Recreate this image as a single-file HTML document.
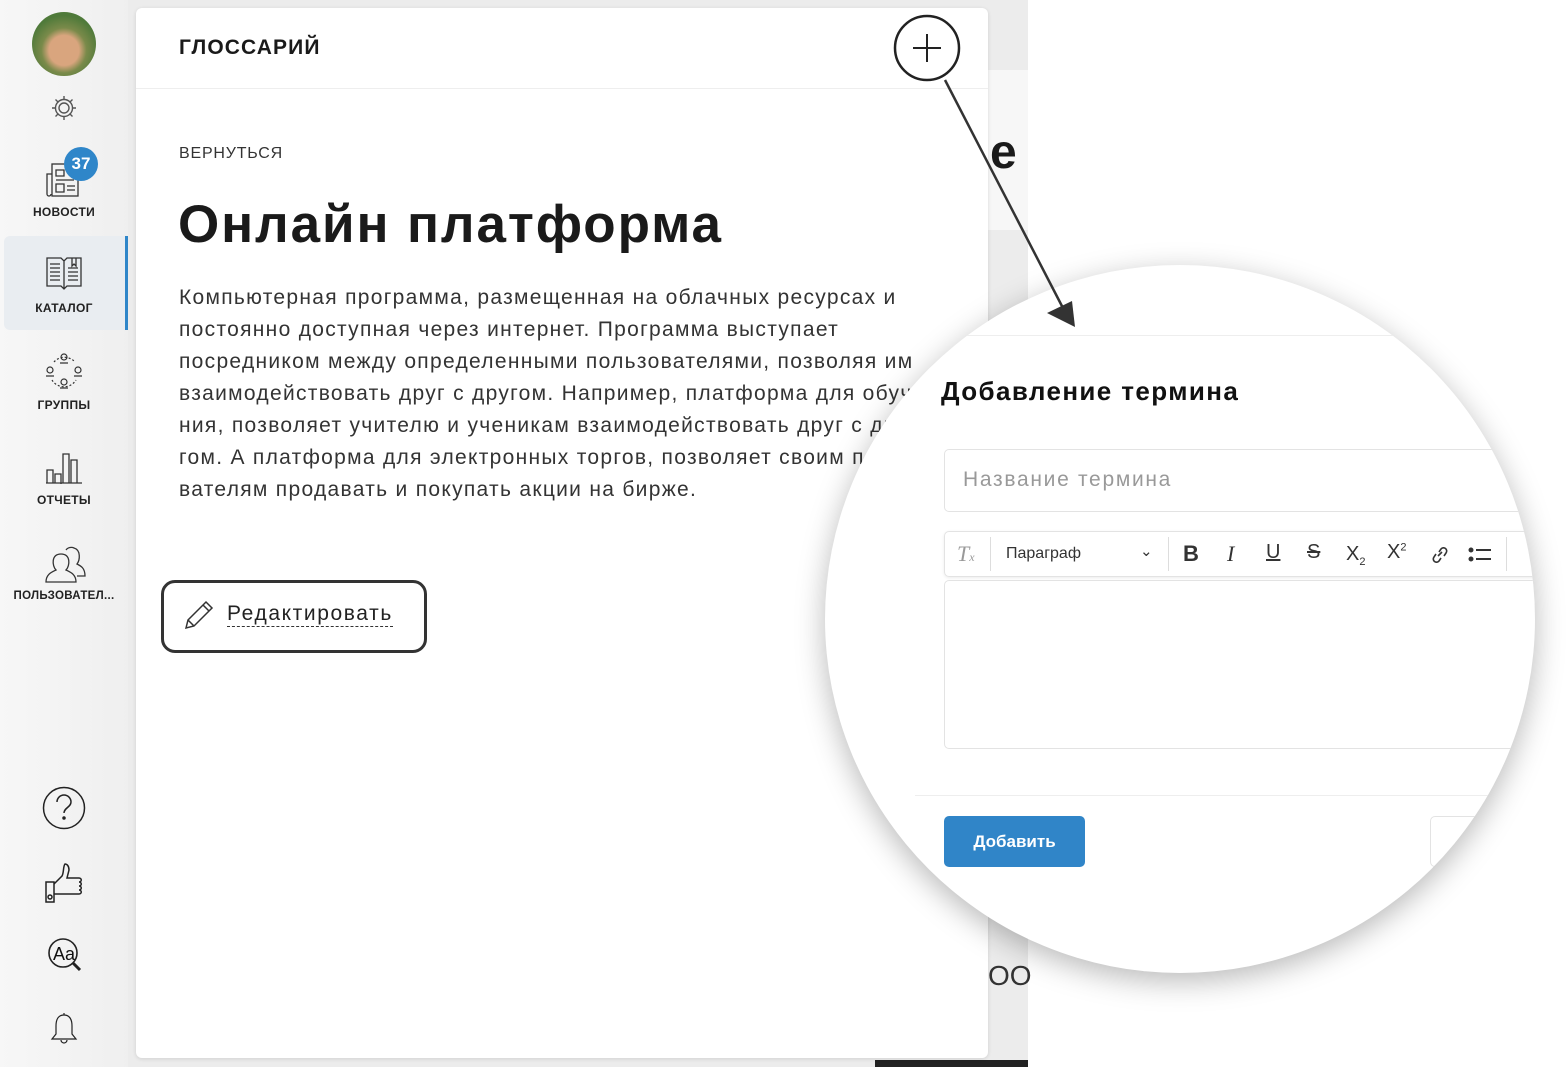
<!DOCTYPE html>
<html><head><meta charset="utf-8"><style>
*{margin:0;padding:0;box-sizing:border-box}
body{width:1568px;height:1067px;position:relative;overflow:hidden;background:#fff;font-family:"Liberation Sans",sans-serif;color:#1a1a1a}
.side{position:absolute;left:0;top:0;width:130px;height:1067px;background:linear-gradient(90deg,#f7f7f7,#efefef)}
.bg2{position:absolute;left:128px;top:0;width:900px;height:1067px;background:#ececec}
.card{position:absolute;left:136px;top:8px;width:852px;height:1050px;background:#fff;border-radius:6px;box-shadow:0 1px 4px rgba(0,0,0,.12)}
.nav{position:absolute;left:0;width:128px;text-align:center;font-size:12px;font-weight:bold;letter-spacing:.3px;color:#222}
.abs{position:absolute}
.txt{position:absolute;left:179px;top:282px;font-size:21px;line-height:32px;color:#333;letter-spacing:1.3px;white-space:nowrap}
.lens{position:absolute;left:825px;top:265px;width:710px;height:708px;border-radius:50%;background:#fff;overflow:hidden;box-shadow:0 8px 30px rgba(0,0,0,.28)}
.in{position:absolute;left:-825px;top:-265px;width:1568px;height:1067px}
</style></head><body>
<div class="side"></div>
<div class="bg2"></div>
<div class="abs" style="left:988px;top:70px;width:40px;height:160px;background:#f7f7f7"></div>
<div class="abs" style="left:990px;top:125px;font-size:48px;font-weight:bold">е</div>
<div class="abs" style="left:988px;top:960px;font-size:28px;color:#333">ОО</div>
<div class="abs" style="left:875px;top:1060px;width:153px;height:7px;background:#222"></div>
<!-- sidebar -->
<div class="abs" style="left:32px;top:12px;width:64px;height:64px;border-radius:50%;background:radial-gradient(circle at 50% 60%,#d9a57e 0 30%,#7a8a4a 45%,#4f7a3a 70%)"></div>
<svg class="abs" style="left:50px;top:94px" width="28" height="28" viewBox="0 0 28 28" fill="none" stroke="#555" stroke-width="1.4"><circle cx="14" cy="14" r="5"/><circle cx="14" cy="14" r="8.5"/><path d="M14 2v4M14 22v4M2 14h4M22 14h4M5.5 5.5l3 3M19.5 19.5l3 3M5.5 22.5l3-3M19.5 8.5l3-3"/></svg>
<svg class="abs" style="left:44px;top:160px" width="40" height="38" viewBox="0 0 40 38" fill="none" stroke="#333" stroke-width="1.3"><rect x="8" y="4" width="26" height="32"/><path d="M8 14H3v20a2 2 0 004 0M12 10h8v6h-8zM12 20h18M12 24h8v8h-8zM23 26h8M23 30h8"/></svg>
<div class="abs" style="left:64px;top:147px;width:34px;height:34px;border-radius:50%;background:#2f86c9;color:#fff;font-weight:bold;font-size:17px;text-align:center;line-height:34px">37</div>
<div class="nav" style="top:205px">НОВОСТИ</div>
<div class="abs" style="left:4px;top:236px;width:124px;height:94px;background:#e9edf1;border-radius:6px 0 0 6px"></div>
<div class="abs" style="left:125px;top:236px;width:3px;height:94px;background:#2f86c9"></div>
<svg class="abs" style="left:44px;top:254px" width="40" height="38" viewBox="0 0 40 38" fill="none" stroke="#333" stroke-width="1.3"><path d="M3 4h14l3 3 3-3h14v28H23l-3 3-3-3H3zM20 7v28M6 10h10M6 14h10M6 18h10M6 22h10M6 26h10M24 14h10M24 18h10M24 22h10M24 26h10M28 4v8l2-2 2 2V4"/></svg>
<div class="nav" style="top:301px">КАТАЛОГ</div>
<svg class="abs" style="left:44px;top:350px" width="40" height="42" viewBox="0 0 40 42" fill="none" stroke="#333" stroke-width="1.2"><circle cx="20" cy="7" r="3"/><circle cx="6" cy="20" r="3"/><circle cx="34" cy="20" r="3"/><circle cx="20" cy="32" r="3"/><path d="M16 13h8M2 26h8M30 26h8M16 38h8" /><path d="M10 12a14 14 0 0120-1M8 30a14 14 0 0024 0" stroke-dasharray="2 2"/></svg>
<div class="nav" style="top:398px">ГРУППЫ</div>
<svg class="abs" style="left:44px;top:452px" width="40" height="32" viewBox="0 0 40 32" fill="none" stroke="#333" stroke-width="1.3"><path d="M2 31h36M3 31V18h6v13M11 31V22h6v13M19 31V2h6v29M27 31V8h6v23"/></svg>
<div class="nav" style="top:493px">ОТЧЕТЫ</div>
<svg class="abs" style="left:44px;top:545px" width="42" height="38" viewBox="0 0 42 38" fill="none" stroke="#333" stroke-width="1.3"><path d="M2 37c0-8 6-10 10-12-4-4-5-16 5-16s9 12 5 16c4 2 10 4 10 12z"/><path d="M22 5c2-3 6-3 8-2 7 2 6 12 3 16 4 2 8 4 8 12h-8"/></svg>
<div class="nav" style="top:590px;font-size:11.5px">ПОЛЬЗОВАТЕЛ...</div>
<svg class="abs" style="left:42px;top:786px" width="44" height="44" viewBox="0 0 44 44" fill="none" stroke="#222" stroke-width="1.5"><circle cx="22" cy="22" r="20.5"/><path d="M15 16a7 7 0 1114 0c0 5-7 6-7 11"/><circle cx="22" cy="32" r="1" fill="#222"/></svg>
<svg class="abs" style="left:44px;top:860px" width="40" height="44" viewBox="0 0 40 44" fill="none" stroke="#222" stroke-width="1.5"><rect x="2" y="22" width="8" height="20"/><circle cx="6" cy="37" r="2"/><path d="M10 24l8-8c2-3 1-10 3-12 2 0 4 2 4 6l-2 8h12c3 0 3 4 0 4 3 0 3 4 0 4 3 0 3 4 0 4 3 0 3 4 0 4H10"/></svg>
<svg class="abs" style="left:46px;top:936px" width="38" height="38" viewBox="0 0 38 38" fill="none" stroke="#222" stroke-width="1.6"><circle cx="17" cy="17" r="14"/><path d="M27 27l7 7" stroke-width="3"/><text x="7" y="24" font-size="18" fill="#111" stroke="none" font-family="Liberation Sans">Aa</text></svg>
<svg class="abs" style="left:50px;top:1012px" width="28" height="34" viewBox="0 0 28 34" fill="none" stroke="#222" stroke-width="1.2"><path d="M14 3c-6 0-8 5-8 11v8l-4 5h24l-4-5v-8c0-6-2-11-8-11zM11 28a3 3 0 006 0M14 1v2"/></svg>
<!-- card -->
<div class="card">
<div class="abs" style="left:0;top:80px;width:852px;height:1px;background:#eee"></div>
</div>
<div class="abs" style="left:179px;top:36px;font-size:21px;font-weight:bold;letter-spacing:1.1px">ГЛОССАРИЙ</div>
<div class="abs" style="left:179px;top:145px;font-size:16px;color:#333;letter-spacing:.8px">ВЕРНУТЬСЯ</div>
<div class="abs" style="left:178px;top:194px;font-size:53px;font-weight:bold;letter-spacing:1.9px">Онлайн платформа</div>
<div class="txt">Компьютерная программа, размещенная на облачных ресурсах и<br>постоянно доступная через интернет. Программа выступает<br>посредником между определенными пользователями, позволяя им<br>взаимодействовать друг с другом. Например, платформа для обуче-<br>ния, позволяет учителю и ученикам взаимодействовать друг с дру-<br>гом. А платформа для электронных торгов, позволяет своим пользо-<br>вателям продавать и покупать акции на бирже.</div>
<div class="abs" style="left:161px;top:580px;width:266px;height:73px;border:3px solid #333;border-radius:14px"></div>
<svg class="abs" style="left:182px;top:598px" width="34" height="34" viewBox="0 0 34 34" fill="none" stroke="#333" stroke-width="1.5"><path d="M4 30l2-8L24 4l6 6-18 18zM6 22l6 6M21 7l6 6"/></svg>
<div class="abs" style="left:227px;top:602px;font-size:21px;color:#222;border-bottom:1.5px dashed #333;line-height:24px;letter-spacing:1.6px">Редактировать</div>
<!-- plus and arrow -->
<svg class="abs" style="left:0;top:0" width="1568" height="1067" fill="none">
<circle cx="927" cy="48" r="32" fill="#fff" stroke="#222" stroke-width="2.5"/>
<path d="M927 34v28M913 48h28" stroke="#222" stroke-width="2"/>
</svg>
<!-- lens -->
<div class="lens"><div class="in">
<div class="abs" style="left:900px;top:335px;width:700px;height:1px;background:#eee"></div>
<div class="abs" style="left:941px;top:376px;font-size:26px;font-weight:bold;color:#111;letter-spacing:1.4px">Добавление термина</div>
<div class="abs" style="left:944px;top:449px;width:620px;height:63px;border:1px solid #e3e3e3;border-radius:5px"></div>
<div class="abs" style="left:963px;top:468px;font-size:21px;color:#999;letter-spacing:1.7px">Название термина</div>
<div class="abs" style="left:944px;top:531px;width:620px;height:46px;border:1px solid #e3e3e3;border-radius:5px;box-shadow:0 1px 3px rgba(0,0,0,.08)"></div>
<div class="abs" style="left:990px;top:537px;width:1px;height:34px;background:#ddd"></div>
<div class="abs" style="left:1168px;top:537px;width:1px;height:34px;background:#ddd"></div>
<div class="abs" style="left:1506px;top:537px;width:1px;height:34px;background:#ddd"></div>
<div class="abs" style="left:957px;top:541px;font-size:22px;font-style:italic;color:#999;font-family:'Liberation Serif',serif">T<span style="font-size:12px">x</span></div>
<div class="abs" style="left:1006px;top:545px;font-size:16px;color:#333">Параграф</div>
<div class="abs" style="left:1140px;top:542px;font-size:15px;color:#333">&#8964;</div>
<div class="abs" style="left:1183px;top:541px;font-size:22px;font-weight:bold;color:#333">B</div>
<div class="abs" style="left:1227px;top:541px;font-size:22px;font-style:italic;color:#333;font-family:'Liberation Serif',serif">I</div>
<div class="abs" style="left:1266px;top:541px;font-size:20px;color:#333;text-decoration:underline">U</div>
<div class="abs" style="left:1307px;top:541px;font-size:20px;color:#333;text-decoration:line-through">S</div>
<div class="abs" style="left:1346px;top:543px;font-size:20px;color:#333">X<sub style="font-size:11px">2</sub></div>
<div class="abs" style="left:1387px;top:541px;font-size:20px;color:#333">X<sup style="font-size:11px">2</sup></div>
<svg class="abs" style="left:1430px;top:544px" width="20" height="22" viewBox="0 0 20 22" fill="none" stroke="#333" stroke-width="1.6"><path d="M8 12l4-4M6 10l-2 3a3 3 0 005 4l2-3M14 12l2-3a3 3 0 00-5-4l-2 3"/></svg>
<svg class="abs" style="left:1468px;top:545px" width="24" height="20" viewBox="0 0 24 20" stroke="#333" stroke-width="2"><circle cx="3" cy="5" r="1.5" fill="#333"/><circle cx="3" cy="14" r="1.5" fill="#333"/><path d="M8 5h15M8 14h15"/></svg>
<div class="abs" style="left:944px;top:580px;width:620px;height:169px;border:1px solid #e3e3e3;border-radius:5px"></div>
<div class="abs" style="left:915px;top:795px;width:700px;height:1px;background:#eee"></div>
<div class="abs" style="left:944px;top:816px;width:141px;height:51px;background:#3085c8;border-radius:5px;color:#fff;font-weight:bold;font-size:17px;text-align:center;line-height:51px">Добавить</div>
<div class="abs" style="left:1430px;top:816px;width:140px;height:51px;border:1px solid #e3e3e3;border-radius:5px"></div>
</div></div>
<svg class="abs" style="left:0;top:0" width="1568" height="1067" fill="none">
<path d="M945 80L1064 310" stroke="#333" stroke-width="2.5"/>
<path d="M1075 327l-28-14 25-12z" fill="#333"/>
</svg>
</body></html>
